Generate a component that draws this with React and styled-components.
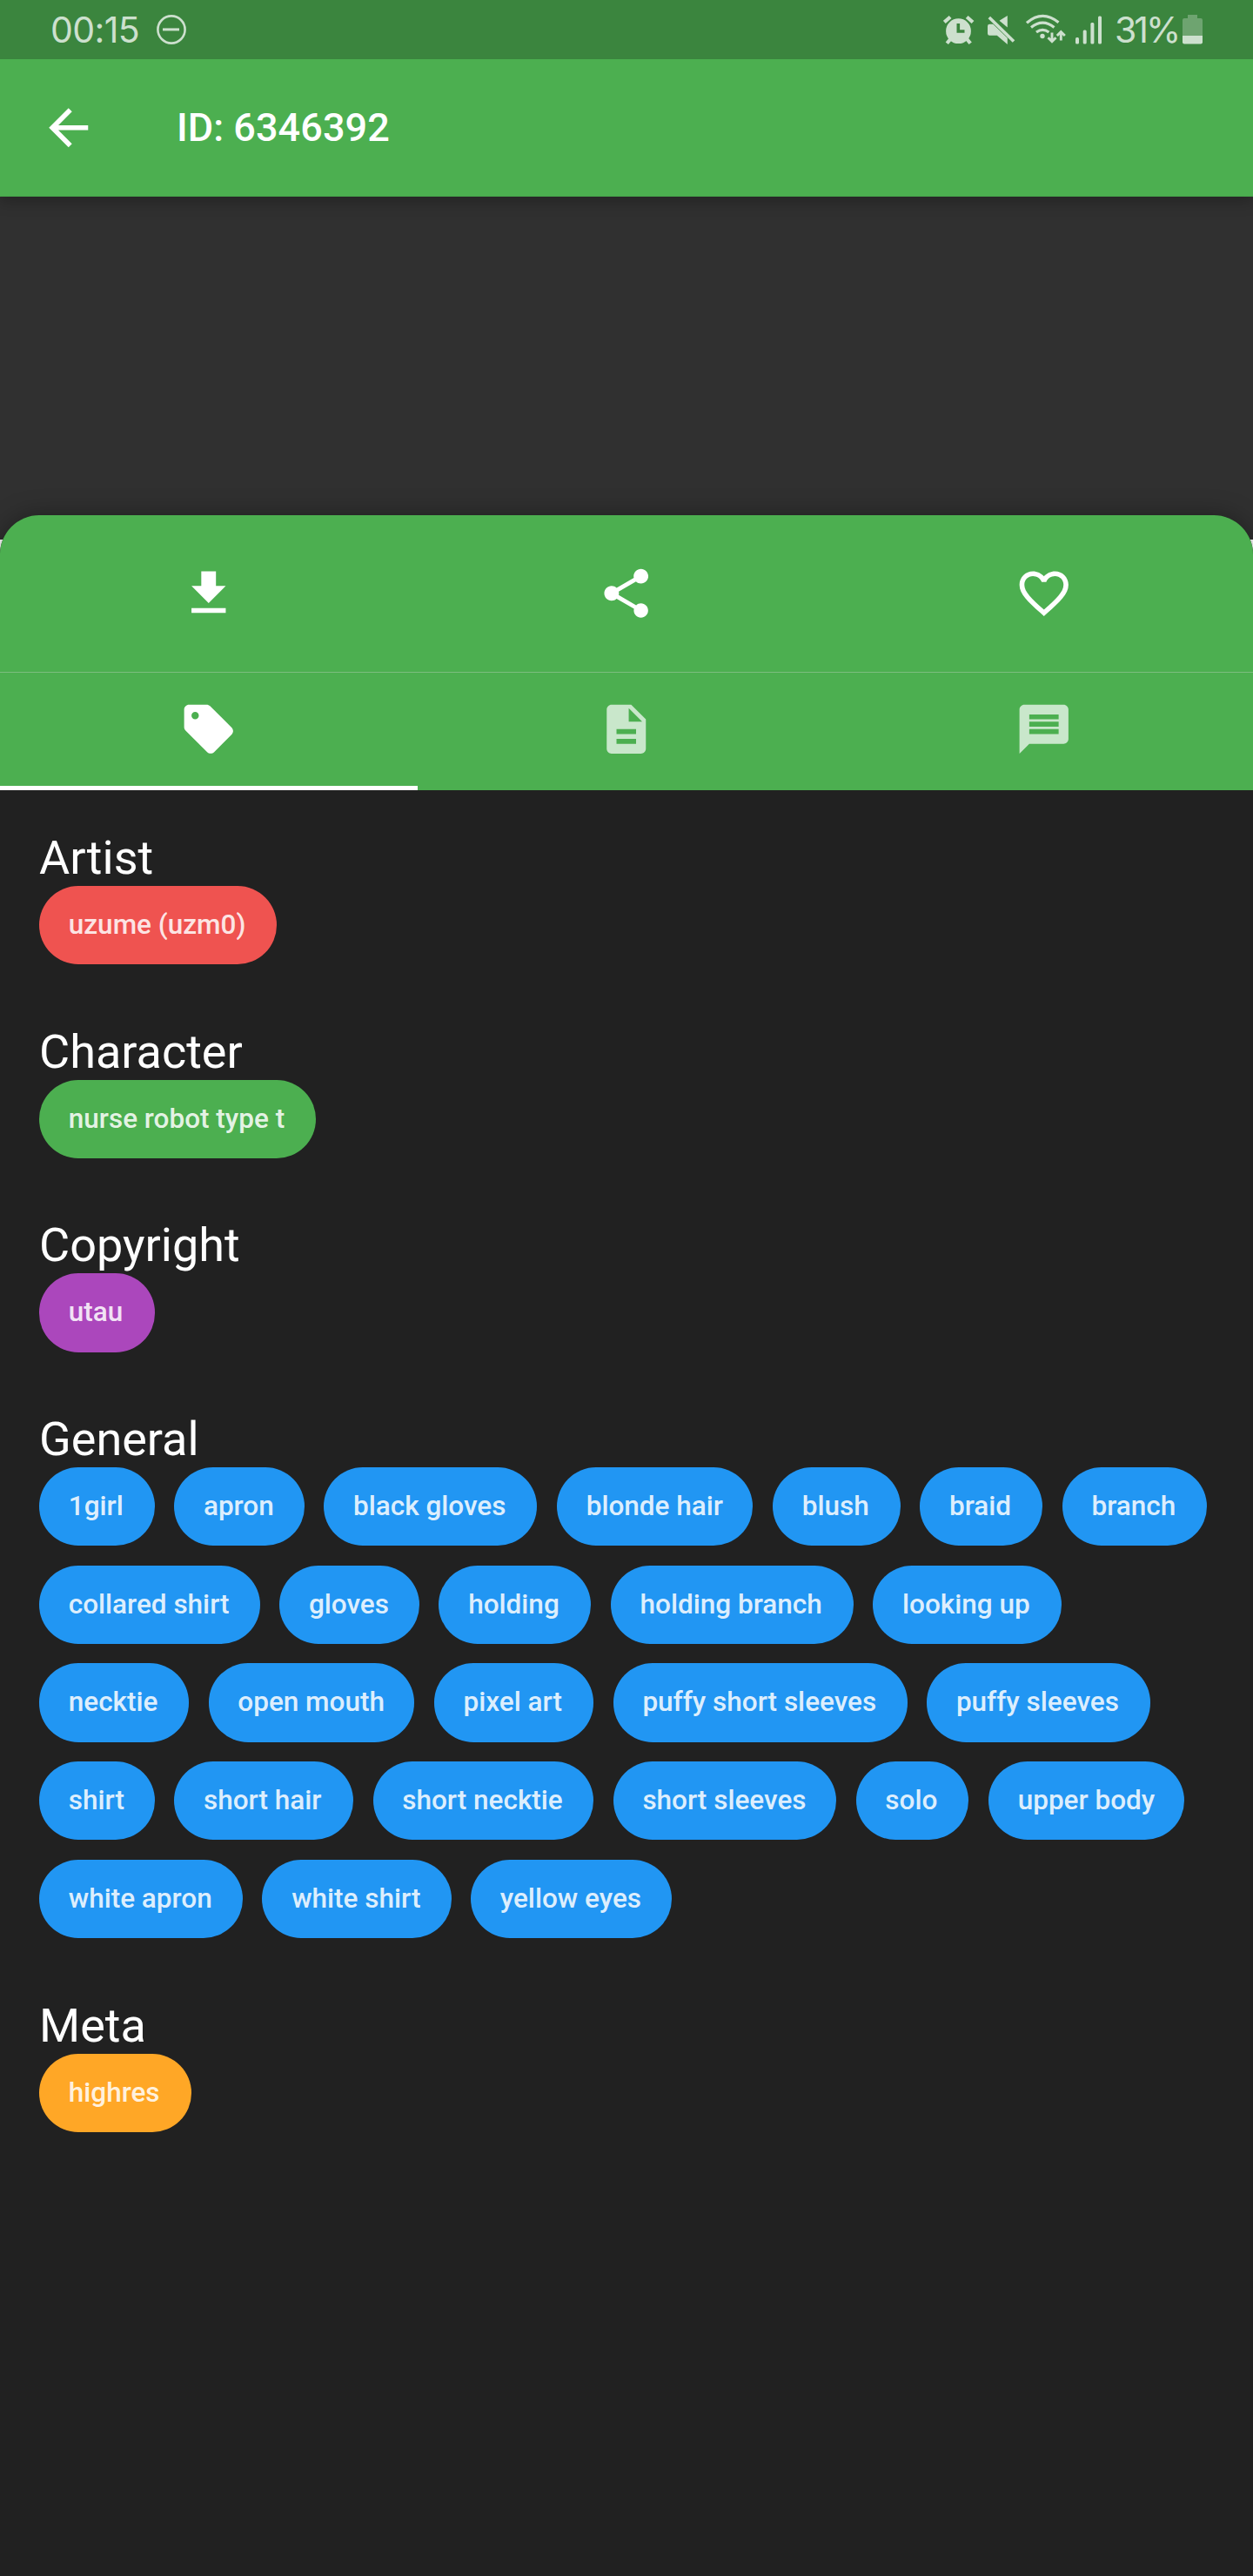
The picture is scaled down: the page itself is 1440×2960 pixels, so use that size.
import React, { useLayoutEffect, useRef, useState } from "react";
import styled, { createGlobalStyle } from "styled-components";

const GlobalStyle = createGlobalStyle`
  *, *::before, *::after { box-sizing: border-box; }
  body { margin: 0; background: #212121; font-family: Roboto, "Liberation Sans", sans-serif; }
  svg { display: block; }
`;

const Screen = styled.div`
  width: 1440px;
  height: 2960px;
  display: flex;
  flex-direction: column;
  background: #212121;
  color: #fff;
  overflow: hidden;
`;

const StatusBar = styled.header`
  height: 68px;
  flex: none;
  display: flex;
  align-items: center;
  padding: 0 58px;
  background: #3b853e;
  color: #cde0ce;
  z-index: 2;
`;

const StatusText = styled.span`
  font: 400 41px/68px Inter, Roboto, sans-serif;
  letter-spacing: ${(p) => p.$tracking || 0}px;
  width: ${(p) => p.$width}px;
  margin-left: ${(p) => p.$gap || 0}px;
  white-space: nowrap;
`;

const StatusGlyph = styled.svg`
  flex: none;
  margin-left: ${(p) => p.$gap}px;
  width: ${(p) => p.$width}px;
  height: 68px;
  fill: currentColor;
`;

const Spacer = styled.div`
  flex: 1;
`;

const AppBar = styled.div`
  height: 158px;
  flex: none;
  display: flex;
  align-items: center;
  background: #4caf50;
  border-bottom: 1px solid #46a24a;
  box-shadow: 0 5px 16px rgba(0, 0, 0, 0.27);
  z-index: 1;
`;

const BackButton = styled.button`
  width: 157.5px;
  height: 157px;
  display: grid;
  place-items: center;
  border: 0;
  padding: 0;
  background: none;
  color: #fff;
`;

const Title = styled.h1`
  margin: 0 0 0 45.5px;
  font-size: 45px;
  font-weight: 500;
  line-height: 53px;
  letter-spacing: 0.05px;
`;

const Icon = styled.svg`
  width: 67.5px;
  height: 67.5px;
  fill: currentColor;
`;

const Preview = styled.div`
  height: 394px;
  flex: none;
  background: #303030;
`;

const SheetBackdrop = styled.main`
  flex: 1;
  display: flex;
  flex-direction: column;
  background: #fff;
`;

const Sheet = styled.section`
  flex: 1;
  margin-top: -28px;
  border-radius: 45px 45px 0 0;
  overflow: hidden;
  background: #212121;
  box-shadow: 0 0 28px rgba(0, 0, 0, 0.34);
`;

const SheetHeader = styled.div`
  background: #4caf50;
`;

const Row = styled.div`
  display: grid;
  grid-template-columns: repeat(3, 1fr);
`;

const ActionRow = styled(Row)`
  height: 181px;
  border-bottom: 1px solid #7bbd7e;
`;

const TabRow = styled(Row)`
  height: 135px;
`;

const Action = styled.button`
  display: grid;
  place-items: center;
  border: 0;
  padding: 0;
  background: none;
  color: #fff;
`;

const Tab = styled(Action)`
  color: ${(p) => (p.$active ? "#fff" : "rgba(255, 255, 255, 0.7)")};
  border-bottom: 5.6px solid ${(p) => (p.$active ? "#fff" : "transparent")};
`;

const TagList = styled.div`
  display: flex;
  flex-direction: column;
  gap: 67.5px;
  padding: 45px;
`;

const Group = styled.section`
  display: flex;
  flex-direction: column;
`;

const GroupTitle = styled.h2`
  margin: 0;
  font-size: 54px;
  font-weight: 400;
  line-height: 65px;
`;

const Chips = styled.div`
  display: flex;
  flex-wrap: wrap;
  gap: 22.5px;
`;

const ChipBody = styled.span`
  flex: none;
  height: 90.2px;
  padding: 0 33.75px;
  border-radius: 45.1px;
  background: ${(p) => p.$color};
  color: rgba(255, 255, 255, 0.87);
  font-size: 31.5px;
  font-weight: 500;
  line-height: 89px;
  white-space: nowrap;
`;

const DENSITY = 2.8125;
const LABEL_ALLOWANCE = 0.5;

const Chip = ({ color, children }) => {
  const ref = useRef(null);
  const [width, setWidth] = useState();
  useLayoutEffect(() => {
    const natural = ref.current.getBoundingClientRect().width;
    setWidth(Math.ceil(natural / DENSITY - 0.01) * DENSITY + LABEL_ALLOWANCE);
  }, []);
  return (
    <ChipBody ref={ref} $color={color} style={{ width }}>
      {children}
    </ChipBody>
  );
};

const paths = {
  back: "M20 11H7.83l5.59-5.59L12 4l-8 8 8 8 1.41-1.41L7.83 13H20v-2z",
  download: "M19 9h-4V3H9v6H5l7 7 7-7zM5 18v2h14v-2H5z",
  share:
    "M18 16.08c-.76 0-1.44.3-1.96.77L8.91 12.7c.05-.23.09-.46.09-.7s-.04-.47-.09-.7l7.05-4.11c.54.5 1.25.81 2.04.81 1.66 0 3-1.34 3-3s-1.34-3-3-3-3 1.34-3 3c0 .24.04.47.09.7L8.04 9.81C7.5 9.31 6.79 9 6 9c-1.66 0-3 1.34-3 3s1.34 3 3 3c.79 0 1.5-.31 2.04-.81l7.12 4.16c-.05.21-.08.43-.08.65 0 1.61 1.31 2.92 2.92 2.92s2.92-1.31 2.92-2.92-1.31-2.92-2.92-2.92z",
  favorite:
    "M16.5 3c-1.74 0-3.41.81-4.5 2.09C10.91 3.81 9.24 3 7.5 3 4.42 3 2 5.42 2 8.5c0 3.78 3.4 6.86 8.55 11.54L12 21.35l1.45-1.32C18.6 15.36 22 12.28 22 8.5 22 5.42 19.58 3 16.5 3zm-4.4 15.55l-.1.1-.1-.1C7.14 14.24 4 11.39 4 8.5 4 6.5 5.5 5 7.5 5c1.54 0 3.04.99 3.57 2.36h1.87C13.46 5.99 14.96 5 16.5 5c2 0 3.5 1.5 3.5 3.5 0 2.89-3.14 5.74-7.9 10.05z",
  tags: "M21.41 11.41l-8.83-8.83c-.37-.37-.88-.58-1.41-.58H4c-1.1 0-2 .9-2 2v7.17c0 .53.21 1.04.59 1.41l8.83 8.83c.78.78 2.05.78 2.83 0l7.17-7.17c.78-.78.78-2.04-.01-2.83zM6.5 8C5.67 8 5 7.33 5 6.5S5.67 5 6.5 5 8 5.67 8 6.5 7.33 8 6.5 8z",
  description:
    "M14 2H6c-1.1 0-1.99.9-1.99 2L4 20c0 1.1.89 2 1.99 2H18c1.1 0 2-.9 2-2V8l-6-6zm2 16H8v-2h8v2zm0-4H8v-2h8v2zm-3-5V3.5L18.5 9H13z",
  comments:
    "M20 2H4c-1.1 0-2 .9-2 2v18l4-4h14c1.1 0 2-.9 2-2V4c0-1.1-.9-2-2-2zm-2 12H6v-2h12v2zm0-3H6V9h12v2zm0-3H6V6h12v2z",
};

const Glyph = ({ name }) => (
  <Icon viewBox="0 0 24 24">
    <path d={paths[name]} />
  </Icon>
);

const groups = [
  { title: "Artist", color: "#ef5350", tags: ["uzume (uzm0)"] },
  { title: "Character", color: "#4caf50", tags: ["nurse robot type t"] },
  { title: "Copyright", color: "#ab47bc", tags: ["utau"] },
  {
    title: "General",
    color: "#2196f3",
    tags: [
      "1girl", "apron", "black gloves", "blonde hair", "blush", "braid", "branch",
      "collared shirt", "gloves", "holding", "holding branch", "looking up",
      "necktie", "open mouth", "pixel art", "puffy short sleeves", "puffy sleeves",
      "shirt", "short hair", "short necktie", "short sleeves", "solo", "upper body",
      "white apron", "white shirt", "yellow eyes",
    ],
  },
  { title: "Meta", color: "#ffa726", tags: ["highres"] },
];

const DoNotDisturb = () => (
  <StatusGlyph $gap={18} $width={36} viewBox="0 0 36 68">
    <circle cx="19" cy="34" r="15.6" fill="none" stroke="currentColor" strokeWidth="2.6" />
    <rect x="9" y="32.4" width="19" height="3" />
  </StatusGlyph>
);

const Alarm = () => (
  <StatusGlyph $gap={0} $width={36} viewBox="1084 0 36 68">
    <g fill="none" stroke="currentColor" strokeWidth="4.2">
      <path d="M1085.3 25.5l6.8-6M1118 25.5l-6.8-6M1093 44l-4.7 5.8M1110.5 44l4.7 5.8" />
    </g>
    <path
      fillRule="evenodd"
      d="M1101.5 21.3a14.4 14.4 0 1 0 0 28.8a14.4 14.4 0 1 0 0-28.8zM1099.5 27h3.6v7.2h5.4v3.6h-9z"
    />
  </StatusGlyph>
);

const Muted = () => (
  <StatusGlyph $gap={15} $width={32} viewBox="1135 0 32 68">
    <path d="M1157.8 18v13.5l-9.3-7.7zM1135 30q0-2.3 2.3-2.3h4l16.5 16V51l-12-10.3h-8.5q-2.3 0-2.3-2.3z" />
    <path d="M1136.8 20l28.2 27.5" fill="none" stroke="currentColor" strokeWidth="3.6" />
  </StatusGlyph>
);

const Wifi = () => (
  <StatusGlyph $gap={12} $width={46} viewBox="1179 0 46 68">
    <g fill="none" stroke="currentColor" strokeWidth="3.2">
      <path d="M1180 26.3q18-15.5 36.5-.5M1185 31.5q13.3-10.6 26.5 0M1191 37q7.2-5.3 14.4 0" />
    </g>
    <circle cx="1198" cy="41.5" r="2.7" />
    <g fill="none" stroke="currentColor" strokeWidth="2.9">
      <path d="M1209 37.5v10M1204.5 43.3l4.5 4.5 4.5-4.5M1219.3 46.5v-10M1214.8 41l4.5-4.5 4.5 4.5" />
    </g>
  </StatusGlyph>
);

const Signal = () => (
  <StatusGlyph $gap={11} $width={31} viewBox="1236 0 31 68">
    <rect x="1236" y="43" width="4" height="7.5" rx="1.5" />
    <rect x="1244.7" y="34.5" width="4" height="16" rx="1.5" />
    <rect x="1253.4" y="26" width="4" height="24.5" rx="1.5" />
    <rect x="1262" y="18.5" width="4" height="32" rx="1.5" />
  </StatusGlyph>
);

const Battery = () => (
  <StatusGlyph $gap={5} $width={23} viewBox="1359 0 23 68">
    <path opacity=".35" d="M1365 17h11v4h4q2 0 2 2v18h-23V23q0-2 2-2h4z" />
    <path d="M1359 41h23v7.5q0 2-2 2h-19q-2 0-2-2z" />
  </StatusGlyph>
);

export default function App() {
  return (
    <Screen>
      <GlobalStyle />
      <StatusBar>
        <StatusText $width={102} $tracking={-0.6}>00:15</StatusText>
        <DoNotDisturb />
        <Spacer />
        <Alarm />
        <Muted />
        <Wifi />
        <Signal />
        <StatusText $width={73} $gap={14} $tracking={-3}>31%</StatusText>
        <Battery />
      </StatusBar>
      <AppBar>
        <BackButton aria-label="Back">
          <Glyph name="back" />
        </BackButton>
        <Title>ID: 6346392</Title>
      </AppBar>
      <Preview />
      <SheetBackdrop>
        <Sheet>
          <SheetHeader>
            <ActionRow>
              {["download", "share", "favorite"].map((name) => (
                <Action key={name} aria-label={name}>
                  <Glyph name={name} />
                </Action>
              ))}
            </ActionRow>
            <TabRow>
              {["tags", "description", "comments"].map((name, i) => (
                <Tab key={name} $active={i === 0} aria-label={name}>
                  <Glyph name={name} />
                </Tab>
              ))}
            </TabRow>
          </SheetHeader>
          <TagList>
            {groups.map((group) => (
              <Group key={group.title}>
                <GroupTitle>{group.title}</GroupTitle>
                <Chips>
                  {group.tags.map((tag) => (
                    <Chip key={tag} color={group.color}>{tag}</Chip>
                  ))}
                </Chips>
              </Group>
            ))}
          </TagList>
        </Sheet>
      </SheetBackdrop>
    </Screen>
  );
}
